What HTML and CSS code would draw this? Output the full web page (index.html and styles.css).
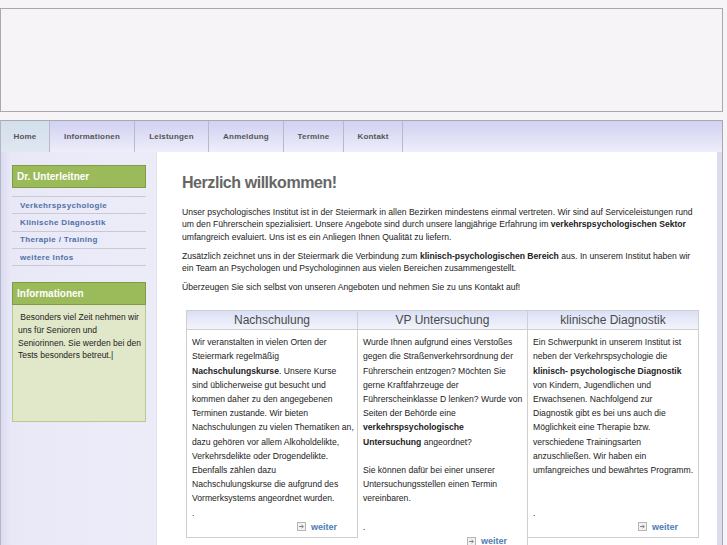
FILE: index.html
```html
<!DOCTYPE html>
<html lang="de">
<head>
<meta charset="utf-8">
<title>Herzlich willkommen</title>
<link rel="stylesheet" href="styles.css">
</head>
<body>
<div class="page">
  <div class="banner"></div>
  <div class="frame">
    <nav class="nav">
      <a class="tab active">Home</a>
      <a class="tab">Informationen</a>
      <a class="tab">Leistungen</a>
      <a class="tab">Anmeldung</a>
      <a class="tab">Termine</a>
      <a class="tab">Kontakt</a>
    </nav>
    <div class="body">
      <aside class="sidebar">
        <div class="side-title">Dr. Unterleitner</div>
        <ul class="side-menu">
          <li><a>Verkehrspsychologie</a></li>
          <li><a>Klinische Diagnostik</a></li>
          <li><a>Therapie / Training</a></li>
          <li><a>weitere Infos</a></li>
        </ul>
        <div class="info-box">
          <div class="info-head">Informationen</div>
          <div class="info-body">&nbsp;Besonders viel Zeit nehmen wir<br>uns für Senioren und<br>Seniorinnen. Sie werden bei den<br>Tests besonders betreut.|</div>
        </div>
      </aside>
      <main class="main">
        <h1 class="title">Herzlich willkommen!</h1>
        <p class="text">Unser psychologisches Institut ist in der Steiermark in allen Bezirken mindestens einmal vertreten. Wir sind auf Serviceleistungen rund<br>um den Führerschein spezialisiert. Unsere Angebote sind durch unsere langjährige Erfahrung im <b>verkehrspsychologischen Sektor</b><br>umfangreich evaluiert. Uns ist es ein Anliegen Ihnen Qualität zu liefern.</p>
        <p class="text">Zusätzlich zeichnet uns in der Steiermark die Verbindung zum <b>klinisch-psychologischen Bereich</b> aus. In unserem Institut haben wir<br>ein Team an Psychologen und Psychologinnen aus vielen Bereichen zusammengestellt.</p>
        <p class="text">Überzeugen Sie sich selbst von unseren Angeboten und nehmen Sie zu uns Kontakt auf!</p>

        <div class="offers">
          <div class="offer offer-1">
            <div class="offer-head">Nachschulung</div>
            <div class="offer-body">
              <p class="cell-p">Wir veranstalten in vielen Orten der<br>Steiermark regelmäßig<br><b>Nachschulungskurse</b>. Unsere Kurse<br>sind üblicherweise gut besucht und<br>kommen daher zu den angegebenen<br>Terminen zustande. Wir bieten<br>Nachschulungen zu vielen Thematiken an,<br>dazu gehören vor allem Alkoholdelikte,<br>Verkehrsdelikte oder Drogendelikte.<br>Ebenfalls zählen dazu<br>Nachschulungskurse die aufgrund des<br>Vormerksystems angeordnet wurden.</p>
              <p class="cell-p">.</p>
              <div class="more"><svg class="more-icon" width="9" height="9" viewBox="0 0 9 9"><rect x="0.5" y="0.5" width="8" height="8" fill="#f2f2f2" stroke="#b5b5b5"/><path d="M2 4.5H6.3M4.6 3L6.3 4.5L4.6 6" fill="none" stroke="#777" stroke-width="0.9"/></svg><a>weiter</a></div>
            </div>
          </div>
          <div class="offer offer-2">
            <div class="offer-head">VP Untersuchung</div>
            <div class="offer-body">
              <p class="cell-p gap-1">Wurde Ihnen aufgrund eines Verstoßes<br>gegen die Straßenverkehrsordnung der<br>Führerschein entzogen? Möchten Sie<br>gerne Kraftfahrzeuge der<br>Führerscheinklasse D lenken? Wurde von<br>Seiten der Behörde eine<br><b>verkehrspsychologische</b><br><b>Untersuchung</b> angeordnet?</p>
              <p class="cell-p gap-1">Sie können dafür bei einer unserer<br>Untersuchungsstellen einen Termin<br>vereinbaren.</p>
              <p class="cell-p">.</p>
              <div class="more"><svg class="more-icon" width="9" height="9" viewBox="0 0 9 9"><rect x="0.5" y="0.5" width="8" height="8" fill="#f2f2f2" stroke="#b5b5b5"/><path d="M2 4.5H6.3M4.6 3L6.3 4.5L4.6 6" fill="none" stroke="#777" stroke-width="0.9"/></svg><a>weiter</a></div>
            </div>
          </div>
          <div class="offer offer-3">
            <div class="offer-head">klinische Diagnostik</div>
            <div class="offer-body">
              <p class="cell-p gap-2">Ein Schwerpunkt in unserem Institut ist<br>neben der Verkehrspsychologie die<br><b>klinisch- psychologische Diagnostik</b><br>von Kindern, Jugendlichen und<br>Erwachsenen. Nachfolgend zur<br>Diagnostik gibt es bei uns auch die<br>Möglichkeit eine Therapie bzw.<br>verschiedene Trainingsarten<br>anzuschließen. Wir haben ein<br>umfangreiches und bewährtes Programm.</p>
              <p class="cell-p">.</p>
              <div class="more"><svg class="more-icon" width="9" height="9" viewBox="0 0 9 9"><rect x="0.5" y="0.5" width="8" height="8" fill="#f2f2f2" stroke="#b5b5b5"/><path d="M2 4.5H6.3M4.6 3L6.3 4.5L4.6 6" fill="none" stroke="#777" stroke-width="0.9"/></svg><a>weiter</a></div>
            </div>
          </div>
        </div>
      </main>
      <div class="edge"></div>
    </div>
  </div>
</div>
</body>
</html>
```

FILE: styles.css
```css
* { box-sizing: border-box; }

html, body {
  margin: 0;
  padding: 0;
  background: #f6f4f6;
  font-family: "Liberation Sans", Arial, sans-serif;
  color: #222;
  overflow: hidden;
}

.page {
  width: 723px;
  padding-top: 8px;
}

.banner {
  height: 104px;
  border: 1px solid #a9a9a9;
  background: #f6f4f6;
  margin-bottom: 8px;
}

.frame {
  border-top: 1px solid #a9a9a9;
  border-left: 1px solid #b5b5c5;
  border-right: 1px solid #a9a9a9;
}

/* navigation */
.nav {
  display: flex;
  height: 31px;
  background: linear-gradient(to bottom, #d1d1f2 0%, #e2e2f7 60%, #eeeefb 100%);
}

.tab {
  display: flex;
  align-items: center;
  justify-content: center;
  border-right: 1px solid #b9b9c9;
  font-size: 8px;
  font-weight: bold;
  letter-spacing: 0.2px;
  color: #555;
}
.tab:nth-child(1) { width: 49px; }
.tab:nth-child(2) { width: 85px; }
.tab:nth-child(3) { width: 74px; }
.tab:nth-child(4) { width: 75px; }
.tab:nth-child(5) { width: 60px; }
.tab:nth-child(6) { width: 59px; }

.tab.active {
  background: linear-gradient(to bottom, #d3dfed 0%, #dfe7f1 100%);
}

/* body row */
.body {
  display: flex;
  align-items: stretch;
  min-height: 420px;
}

.sidebar {
  width: 156px;
  flex: none;
  padding: 13px 10px 0 11px;
  background: linear-gradient(to right, #dcdcf1 0px, #e8e8f7 10px, #ececf9 100%);
  border-right: 1px solid #e2e2ee;
}

.side-title {
  height: 23px;
  background: #9bba5a;
  border: 1px solid #7e9c44;
  color: #fff;
  font-size: 10px;
  font-weight: bold;
  line-height: 21px;
  padding-left: 4px;
}

.side-menu {
  list-style: none;
  margin: 8px 0 0;
  padding: 0;
  border-bottom: 1px solid #c9c9d3;
}
.side-menu li {
  height: 17.3px;
  border-top: 1px solid #c9c9d3;
  display: flex;
  align-items: center;
  padding-left: 8px;
}
.side-menu a {
  font-size: 8px;
  font-weight: bold;
  letter-spacing: 0.35px;
  color: #4f71a4;
}

.info-box {
  margin-top: 16px;
}
.info-head {
  height: 23px;
  background: #9bba5a;
  border: 1px solid #7e9c44;
  color: #fff;
  font-size: 10px;
  font-weight: bold;
  line-height: 21px;
  padding-left: 4px;
}
.info-body {
  height: 117px;
  background: #e1e8c9;
  border: 1px solid #b8c98e;
  border-top: none;
  padding: 6px 4px 0 5px;
  font-size: 8.5px;
  line-height: 12.7px;
  white-space: nowrap;
  color: #222;
}

/* main */
.main {
  width: 560px;
  flex: none;
  background: #fff;
  padding: 21px 15px 0 25px;
}

.title {
  margin: 0 0 12.7px;
  font-size: 16px;
  line-height: 20px;
  font-weight: bold;
  letter-spacing: -0.45px;
  color: #666;
}

.text {
  margin: 0 0 6.5px;
  font-size: 8.6px;
  line-height: 12.5px;
  white-space: nowrap;
  color: #222;
}

.offers {
  display: flex;
  align-items: flex-start;
  margin: 16.5px 0 0 4px;
  width: 513px;
}

.offer {
  border: 1px solid #cfcfcf;
  background: #fff;
}
.offer-1 { width: 172px; }
.offer-2 { width: 170px; border-left: none; }
.offer-3 { width: 171px; border-left: none; }

.offer-head {
  height: 19px;
  border-bottom: 1px solid #cfcfcf;
  background: linear-gradient(to bottom, #dadff5 0%, #e9ecf9 60%, #f3f4fb 100%);
  text-align: center;
  font-size: 12px;
  line-height: 18px;
  color: #4a4a4a;
}

.offer-body {
  padding: 5px 4px 3px 5px;
  font-size: 8.6px;
  line-height: 14.2px;
  color: #222;
}

.cell-p {
  margin: 0;
  white-space: nowrap;
}
.gap-1 { margin-bottom: 14.2px; }
.gap-2 { margin-bottom: 28.4px; }

.more {
  display: flex;
  justify-content: flex-end;
  align-items: center;
  height: 14.2px;
  padding-right: 16px;
}
.more-icon {
  display: block;
  margin-right: 5px;
}
.more a {
  font-size: 9px;
  font-weight: bold;
  color: #4d7cb5;
}

.edge {
  flex: 1;
  background: #dcdcf0;
}
```
